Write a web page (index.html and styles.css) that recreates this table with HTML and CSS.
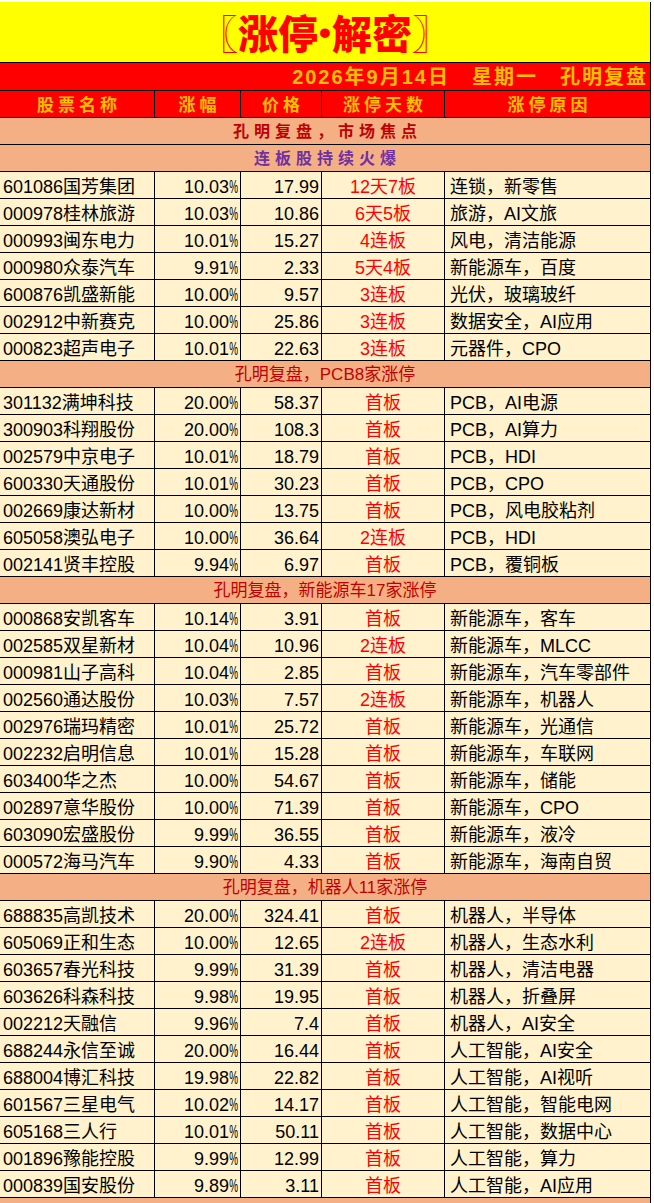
FILE: index.html
```html
<!DOCTYPE html>
<html lang="zh-CN">
<head>
<meta charset="utf-8">
<title>涨停解密</title>
<link rel="stylesheet" href="styles.css">
</head>
<body>
<div class="sheet">
  <div class="title"><span>〖涨停</span><span class="dot">•</span><span>解密〗</span></div>
  <div class="date"><span>2026年9月14日</span><span>星期一</span><span>孔明复盘</span></div>
  <div class="row head">
    <div class="hc">股票名称</div><div class="hc">涨幅</div><div class="hc">价格</div><div class="hc">涨停天数</div><div class="hc">涨停原因</div>
  </div>
  <div class="sec sec-focus">孔明复盘，市场焦点</div>
  <div class="sec sec-purple">连板股持续火爆</div>

  <div class="row"><div class="c name">601086国芳集团</div><div class="c num">10.03<span class="pct">%</span></div><div class="c num">17.99</div><div class="c days">12天7板</div><div class="c why">连锁，新零售</div></div>
  <div class="row"><div class="c name">000978桂林旅游</div><div class="c num">10.03<span class="pct">%</span></div><div class="c num">10.86</div><div class="c days">6天5板</div><div class="c why">旅游，AI文旅</div></div>
  <div class="row"><div class="c name">000993闽东电力</div><div class="c num">10.01<span class="pct">%</span></div><div class="c num">15.27</div><div class="c days">4连板</div><div class="c why">风电，清洁能源</div></div>
  <div class="row"><div class="c name">000980众泰汽车</div><div class="c num">9.91<span class="pct">%</span></div><div class="c num">2.33</div><div class="c days">5天4板</div><div class="c why">新能源车，百度</div></div>
  <div class="row"><div class="c name">600876凯盛新能</div><div class="c num">10.00<span class="pct">%</span></div><div class="c num">9.57</div><div class="c days">3连板</div><div class="c why">光伏，玻璃玻纤</div></div>
  <div class="row"><div class="c name">002912中新赛克</div><div class="c num">10.00<span class="pct">%</span></div><div class="c num">25.86</div><div class="c days">3连板</div><div class="c why">数据安全，AI应用</div></div>
  <div class="row"><div class="c name">000823超声电子</div><div class="c num">10.01<span class="pct">%</span></div><div class="c num">22.63</div><div class="c days">3连板</div><div class="c why">元器件，CPO</div></div>

  <div class="sec">孔明复盘，PCB8家涨停</div>
  <div class="row"><div class="c name">301132满坤科技</div><div class="c num">20.00<span class="pct">%</span></div><div class="c num">58.37</div><div class="c days">首板</div><div class="c why">PCB，AI电源</div></div>
  <div class="row"><div class="c name">300903科翔股份</div><div class="c num">20.00<span class="pct">%</span></div><div class="c num">108.3</div><div class="c days">首板</div><div class="c why">PCB，AI算力</div></div>
  <div class="row"><div class="c name">002579中京电子</div><div class="c num">10.01<span class="pct">%</span></div><div class="c num">18.79</div><div class="c days">首板</div><div class="c why">PCB，HDI</div></div>
  <div class="row"><div class="c name">600330天通股份</div><div class="c num">10.01<span class="pct">%</span></div><div class="c num">30.23</div><div class="c days">首板</div><div class="c why">PCB，CPO</div></div>
  <div class="row"><div class="c name">002669康达新材</div><div class="c num">10.00<span class="pct">%</span></div><div class="c num">13.75</div><div class="c days">首板</div><div class="c why">PCB，风电胶粘剂</div></div>
  <div class="row"><div class="c name">605058澳弘电子</div><div class="c num">10.00<span class="pct">%</span></div><div class="c num">36.64</div><div class="c days">2连板</div><div class="c why">PCB，HDI</div></div>
  <div class="row"><div class="c name">002141贤丰控股</div><div class="c num">9.94<span class="pct">%</span></div><div class="c num">6.97</div><div class="c days">首板</div><div class="c why">PCB，覆铜板</div></div>

  <div class="sec">孔明复盘，新能源车17家涨停</div>
  <div class="row"><div class="c name">000868安凯客车</div><div class="c num">10.14<span class="pct">%</span></div><div class="c num">3.91</div><div class="c days">首板</div><div class="c why">新能源车，客车</div></div>
  <div class="row"><div class="c name">002585双星新材</div><div class="c num">10.04<span class="pct">%</span></div><div class="c num">10.96</div><div class="c days">2连板</div><div class="c why">新能源车，MLCC</div></div>
  <div class="row"><div class="c name">000981山子高科</div><div class="c num">10.04<span class="pct">%</span></div><div class="c num">2.85</div><div class="c days">首板</div><div class="c why">新能源车，汽车零部件</div></div>
  <div class="row"><div class="c name">002560通达股份</div><div class="c num">10.03<span class="pct">%</span></div><div class="c num">7.57</div><div class="c days">2连板</div><div class="c why">新能源车，机器人</div></div>
  <div class="row"><div class="c name">002976瑞玛精密</div><div class="c num">10.01<span class="pct">%</span></div><div class="c num">25.72</div><div class="c days">首板</div><div class="c why">新能源车，光通信</div></div>
  <div class="row"><div class="c name">002232启明信息</div><div class="c num">10.01<span class="pct">%</span></div><div class="c num">15.28</div><div class="c days">首板</div><div class="c why">新能源车，车联网</div></div>
  <div class="row"><div class="c name">603400华之杰</div><div class="c num">10.00<span class="pct">%</span></div><div class="c num">54.67</div><div class="c days">首板</div><div class="c why">新能源车，储能</div></div>
  <div class="row"><div class="c name">002897意华股份</div><div class="c num">10.00<span class="pct">%</span></div><div class="c num">71.39</div><div class="c days">首板</div><div class="c why">新能源车，CPO</div></div>
  <div class="row"><div class="c name">603090宏盛股份</div><div class="c num">9.99<span class="pct">%</span></div><div class="c num">36.55</div><div class="c days">首板</div><div class="c why">新能源车，液冷</div></div>
  <div class="row"><div class="c name">000572海马汽车</div><div class="c num">9.90<span class="pct">%</span></div><div class="c num">4.33</div><div class="c days">首板</div><div class="c why">新能源车，海南自贸</div></div>

  <div class="sec">孔明复盘，机器人11家涨停</div>
  <div class="row"><div class="c name">688835高凯技术</div><div class="c num">20.00<span class="pct">%</span></div><div class="c num">324.41</div><div class="c days">首板</div><div class="c why">机器人，半导体</div></div>
  <div class="row"><div class="c name">605069正和生态</div><div class="c num">10.00<span class="pct">%</span></div><div class="c num">12.65</div><div class="c days">2连板</div><div class="c why">机器人，生态水利</div></div>
  <div class="row"><div class="c name">603657春光科技</div><div class="c num">9.99<span class="pct">%</span></div><div class="c num">31.39</div><div class="c days">首板</div><div class="c why">机器人，清洁电器</div></div>
  <div class="row"><div class="c name">603626科森科技</div><div class="c num">9.98<span class="pct">%</span></div><div class="c num">19.95</div><div class="c days">首板</div><div class="c why">机器人，折叠屏</div></div>
  <div class="row"><div class="c name">002212天融信</div><div class="c num">9.96<span class="pct">%</span></div><div class="c num">7.4</div><div class="c days">首板</div><div class="c why">机器人，AI安全</div></div>
  <div class="row"><div class="c name">688244永信至诚</div><div class="c num">20.00<span class="pct">%</span></div><div class="c num">16.44</div><div class="c days">首板</div><div class="c why">人工智能，AI安全</div></div>
  <div class="row"><div class="c name">688004博汇科技</div><div class="c num">19.98<span class="pct">%</span></div><div class="c num">22.82</div><div class="c days">首板</div><div class="c why">人工智能，AI视听</div></div>
  <div class="row"><div class="c name">601567三星电气</div><div class="c num">10.02<span class="pct">%</span></div><div class="c num">14.17</div><div class="c days">首板</div><div class="c why">人工智能，智能电网</div></div>
  <div class="row"><div class="c name">605168三人行</div><div class="c num">10.01<span class="pct">%</span></div><div class="c num">50.11</div><div class="c days">首板</div><div class="c why">人工智能，数据中心</div></div>
  <div class="row"><div class="c name">001896豫能控股</div><div class="c num">9.99<span class="pct">%</span></div><div class="c num">12.99</div><div class="c days">首板</div><div class="c why">人工智能，算力</div></div>
  <div class="row"><div class="c name">000839国安股份</div><div class="c num">9.89<span class="pct">%</span></div><div class="c num">3.11</div><div class="c days">首板</div><div class="c why">人工智能，AI应用</div></div>
  <div class="sec sec-tail"></div>
</div>
</body>
</html>
```

FILE: styles.css
```css
html, body {
  margin: 0;
  padding: 0;
  background: #ffffff;
}

body {
  padding-top: 2px;
  font-family: "Liberation Sans", "Noto Sans CJK SC", sans-serif;
  overflow: hidden;
}

.sheet {
  width: 651px;
  box-sizing: border-box;
  border-right: 1px solid #000;
  background: #000;
  display: flex;
  flex-direction: column;
  gap: 1px;
}

.title {
  height: 60px;
  background: #ffff00;
  color: #ff0000;
  display: flex;
  align-items: center;
  justify-content: center;
  font-family: "Noto Sans CJK SC", sans-serif;
  font-weight: 900;
  font-size: 40px;
  line-height: 40px;
}

.title .dot {
  font-family: "Liberation Sans", sans-serif;
  font-weight: 700;
  font-size: 34px;
  margin: 0 1px;
}

.date {
  height: 27px;
  background: #ff0000;
  color: #ffc000;
  display: flex;
  justify-content: flex-end;
  align-items: flex-end;
  gap: 22px;
  padding-right: 2px;
  font-family: "Liberation Sans", "Noto Sans CJK SC", sans-serif;
  font-weight: 700;
  font-size: 20px;
  line-height: 21px;
  letter-spacing: 2px;
  padding-bottom: 2px;
  box-sizing: border-box;
}

.row {
  display: grid;
  grid-template-columns: 154px 85px 80px 122px 205px;
  column-gap: 1px;
  height: 26px;
}

.head .hc {
  background: #ff0000;
  color: #ffc000;
  font-family: "Noto Sans CJK SC", sans-serif;
  font-weight: 700;
  font-size: 17px;
  line-height: 20px;
  letter-spacing: 4px;
  text-indent: 4px;
  display: flex;
  align-items: center;
  justify-content: center;
}

.sec {
  height: 26px;
  background: #f4b084;
  color: #c00000;
  display: flex;
  align-items: flex-end;
  justify-content: center;
  font-family: "Liberation Sans", "Noto Sans CJK SC", sans-serif;
  font-size: 17px;
  line-height: 20px;
  padding-bottom: 2px;
  box-sizing: border-box;
}

.sec-focus {
  font-weight: 700;
  letter-spacing: 5px;
  text-indent: 5px;
  font-size: 16px;
}

.sec-purple {
  color: #7030a0;
  font-weight: 700;
  letter-spacing: 5px;
  text-indent: 5px;
  font-size: 16px;
}

.sec-tail {
  height: 20px;
}

.c {
  background: #fff2cc;
  color: #000;
  display: flex;
  align-items: flex-end;
  font-size: 18px;
  line-height: 20px;
  padding-bottom: 1px;
  box-sizing: border-box;
  white-space: nowrap;
  overflow: hidden;
}

.name {
  padding-left: 3px;
}

.num {
  justify-content: flex-end;
  padding-right: 2px;
}

.pct {
  display: inline-block;
  transform: scaleX(0.55);
  transform-origin: right center;
  margin-left: -7px;
}

.days {
  justify-content: center;
  color: #ff0000;
}

.why {
  padding-left: 5px;
}
```
